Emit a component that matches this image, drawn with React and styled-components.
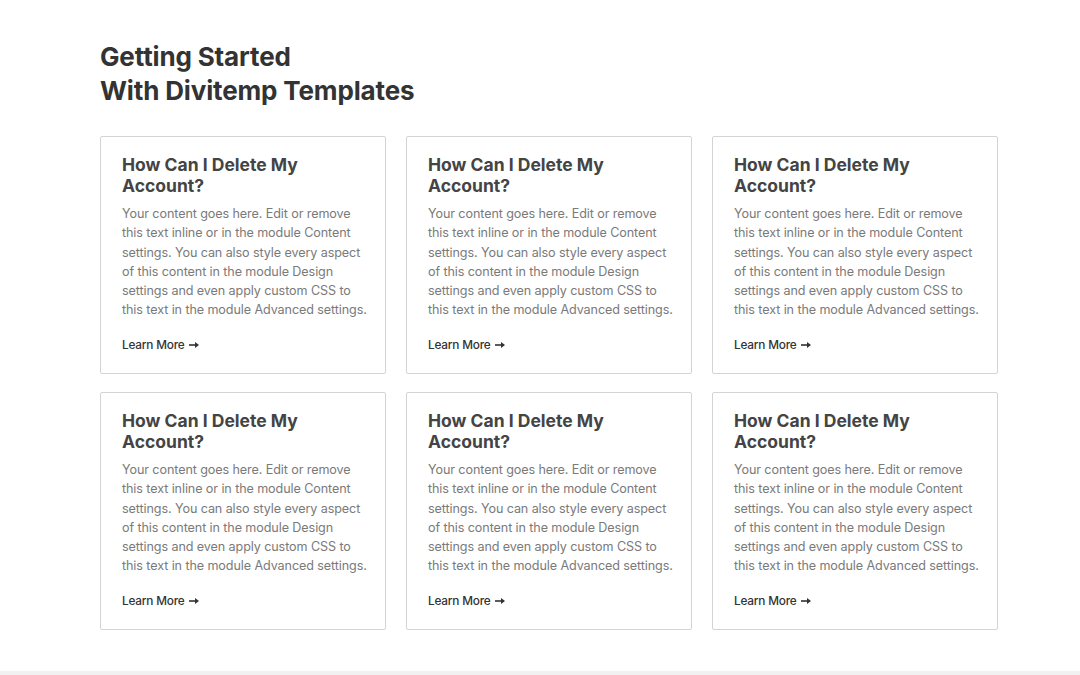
import React from "react";
import styled, { createGlobalStyle } from "styled-components";

const GlobalStyle = createGlobalStyle`
  html, body {
    margin: 0;
    padding: 0;
    background: #ffffff;
  }
  body {
    font-family: Inter, "Noto Sans", "Liberation Sans", sans-serif;
    -webkit-font-smoothing: antialiased;
  }
`;

const Page = styled.div`
  width: 1080px;
  height: 675px;
  box-sizing: border-box;
  background: #ffffff;
  border-bottom: 4px solid #f1f1f1;
  padding: 40px 0 0 100px;
`;

const Heading = styled.h1`
  margin: 0 0 28px;
  font-size: 26px;
  line-height: 34px;
  font-weight: 700;
  color: #333333;
  letter-spacing: -0.15px;
`;

const Grid = styled.div`
  display: grid;
  grid-template-columns: repeat(3, 286px);
  grid-auto-rows: 238px;
  column-gap: 20px;
  row-gap: 18px;
`;

const Card = styled.div`
  box-sizing: border-box;
  border: 1px solid #d4d4d4;
  border-radius: 2px;
  background: #ffffff;
  padding: 17px 16px 0 21px;
  display: flex;
  flex-direction: column;
`;

const Title = styled.h3`
  margin: 0 0 8px;
  font-size: 17.5px;
  line-height: 21px;
  font-weight: 700;
  color: #444444;
  letter-spacing: 0px;
`;

const Body = styled.p`
  margin: 0 0 17px;
  width: 248px;
  font-size: 12.6px;
  line-height: 19.3px;
  color: #7a7a7a;
  letter-spacing: -0.1px;
`;

const More = styled.a`
  display: inline-flex;
  align-items: center;
  gap: 4px;
  font-size: 11.8px;
  line-height: 16px;
  font-weight: 500;
  color: #333333;
  text-decoration: none;
  letter-spacing: -0.2px;
`;

const Arrow = () => (
  <svg width="10" height="8" viewBox="0 0 10 8" aria-hidden="true">
    <path d="M0 4h7" stroke="#333" strokeWidth="1.6" />
    <path d="M6 1l4 3-4 3z" fill="#333" />
  </svg>
);

const text =
  "Your content goes here. Edit or remove this text inline or in the module Content settings. You can also style every aspect of this content in the module Design settings and even apply custom CSS to this text in the module Advanced settings.";

export default function App() {
  return (
    <>
      <GlobalStyle />
      <Page>
        <Heading>
          Getting Started
          <br />
          With Divitemp Templates
        </Heading>
        <Grid>
          {Array.from({ length: 6 }).map((_, i) => (
            <Card key={i}>
              <Title>
                How Can I Delete My
                <br />
                Account?
              </Title>
              <Body>{text}</Body>
              <More href="#">
                Learn More <Arrow />
              </More>
            </Card>
          ))}
        </Grid>
      </Page>
    </>
  );
}
